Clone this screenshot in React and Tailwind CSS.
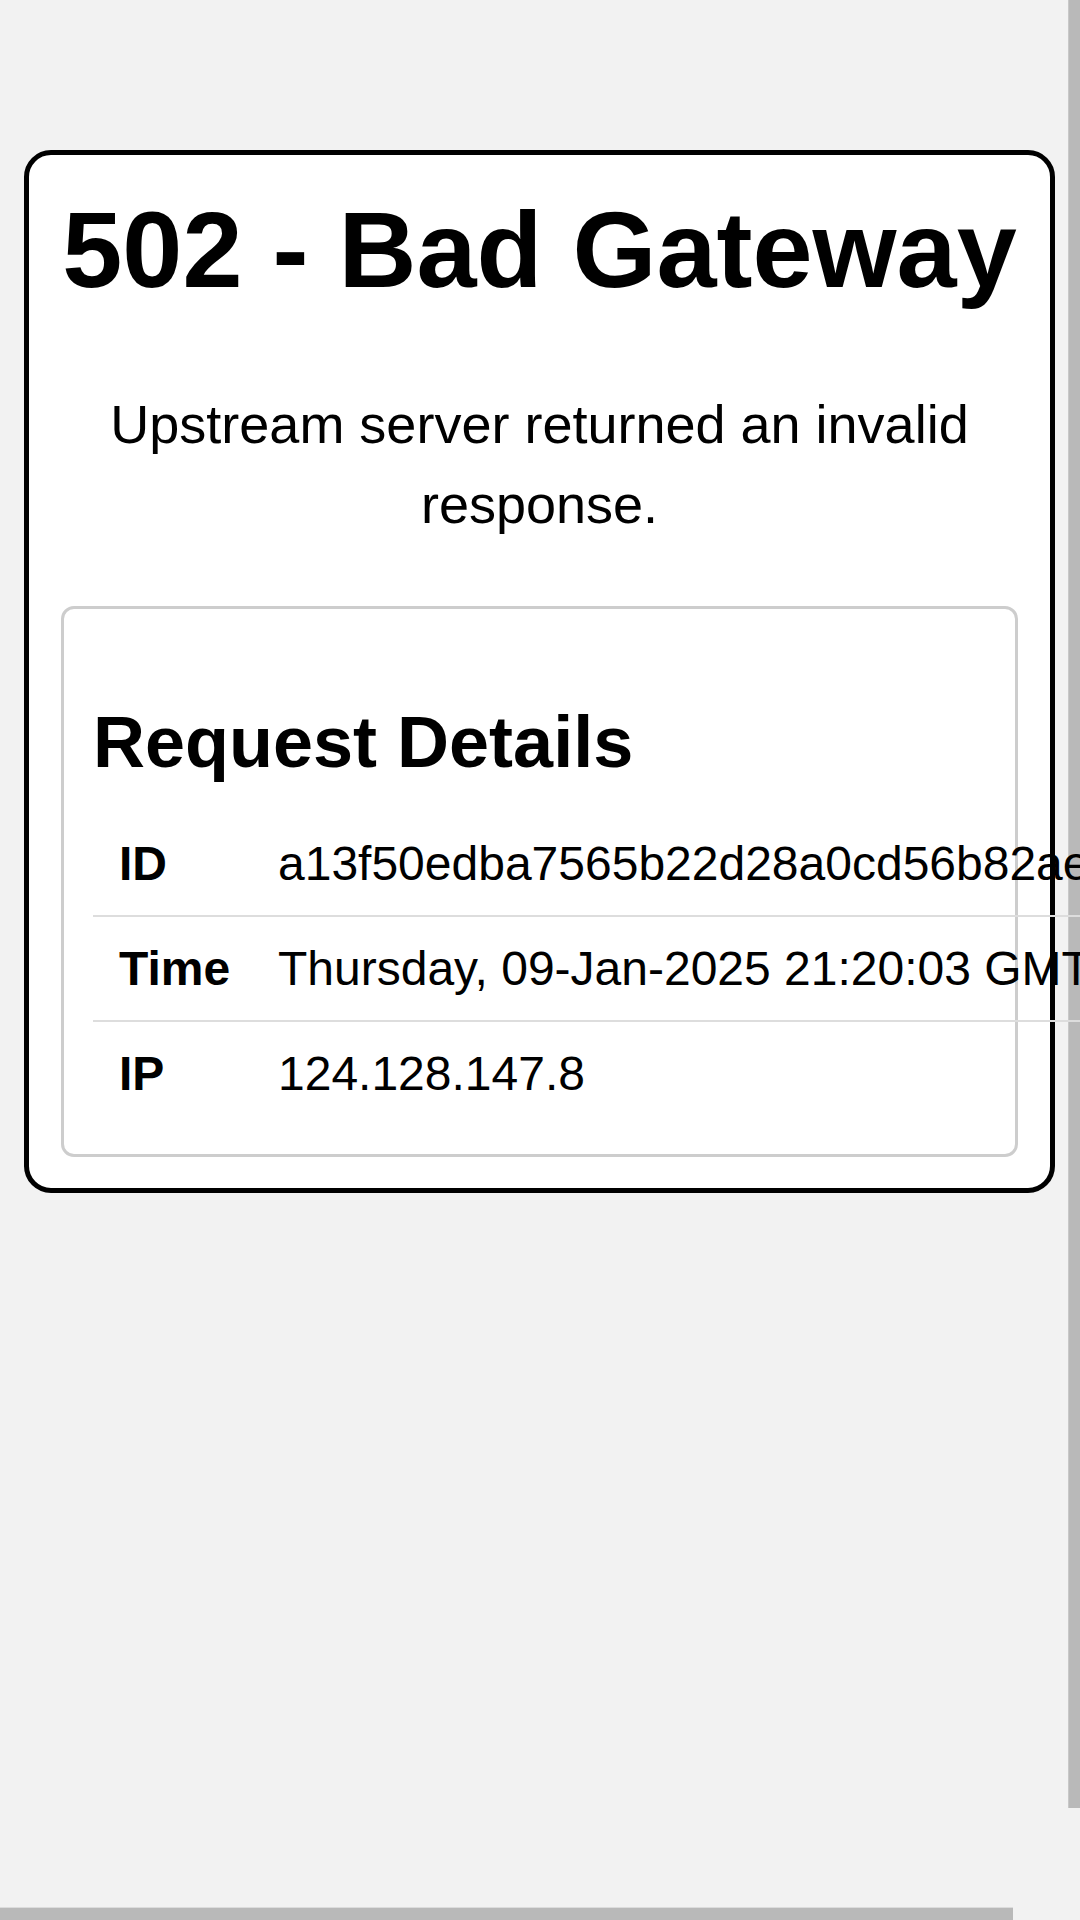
import React from "react";

const rows = [
  { label: "ID", value: "a13f50edba7565b22d28a0cd56b82ae" },
  { label: "Time", value: "Thursday, 09-Jan-2025 21:20:03 GMT" },
  { label: "IP", value: "124.128.147.8" },
];

const App = () => {
  return (
    <div
      className="relative w-[1080px] h-[1920px] overflow-hidden bg-[#f2f2f2] text-black"
      style={{ fontFamily: '"Liberation Sans", Arial, sans-serif' }}
    >
      {/* scrollbars */}
      <div className="absolute right-0 top-0 w-[12px] h-[1808px] bg-[#b9b9b9] border-l border-[#c8c8c8]" />
      <div className="absolute left-0 bottom-0 w-[1013px] h-[13px] bg-[#b9b9b9] border-t border-[#dcdcdc]" />

      <div className="relative z-10 ml-[24px] mt-[150px] w-[1031px] bg-white border-[5px] border-black rounded-[27px] px-8 pt-8 pb-[31px]">
        <h1 className="mt-[9px] text-center text-[108px] font-bold leading-none">
          502 - Bad Gateway
        </h1>
        <p className="mt-[80px] text-center text-[54px] leading-[80px]">
          Upstream server returned an invalid response.
        </p>

        <div className="mt-[62px] border-[3px] border-[#cdcdcd] rounded-[13px] pt-[97px] px-[29px] pb-[29px]">
          <h2 className="text-[72px] font-bold leading-none">Request Details</h2>
          <div className="mt-[34px] w-max min-w-full">
            {rows.map((row, i) => (
              <div
                key={row.label}
                className={
                  i < rows.length - 1
                    ? "flex items-center h-[105px] border-b-2 border-[#dddddd] text-[48px]"
                    : "flex items-center h-[103px] text-[48px]"
                }
              >
                <div className="w-[159px] shrink-0 pl-[26px] font-bold">{row.label}</div>
                <div className="pl-[26px] whitespace-nowrap">{row.value}</div>
              </div>
            ))}
          </div>
        </div>
      </div>
    </div>
  );
};

export default App;
